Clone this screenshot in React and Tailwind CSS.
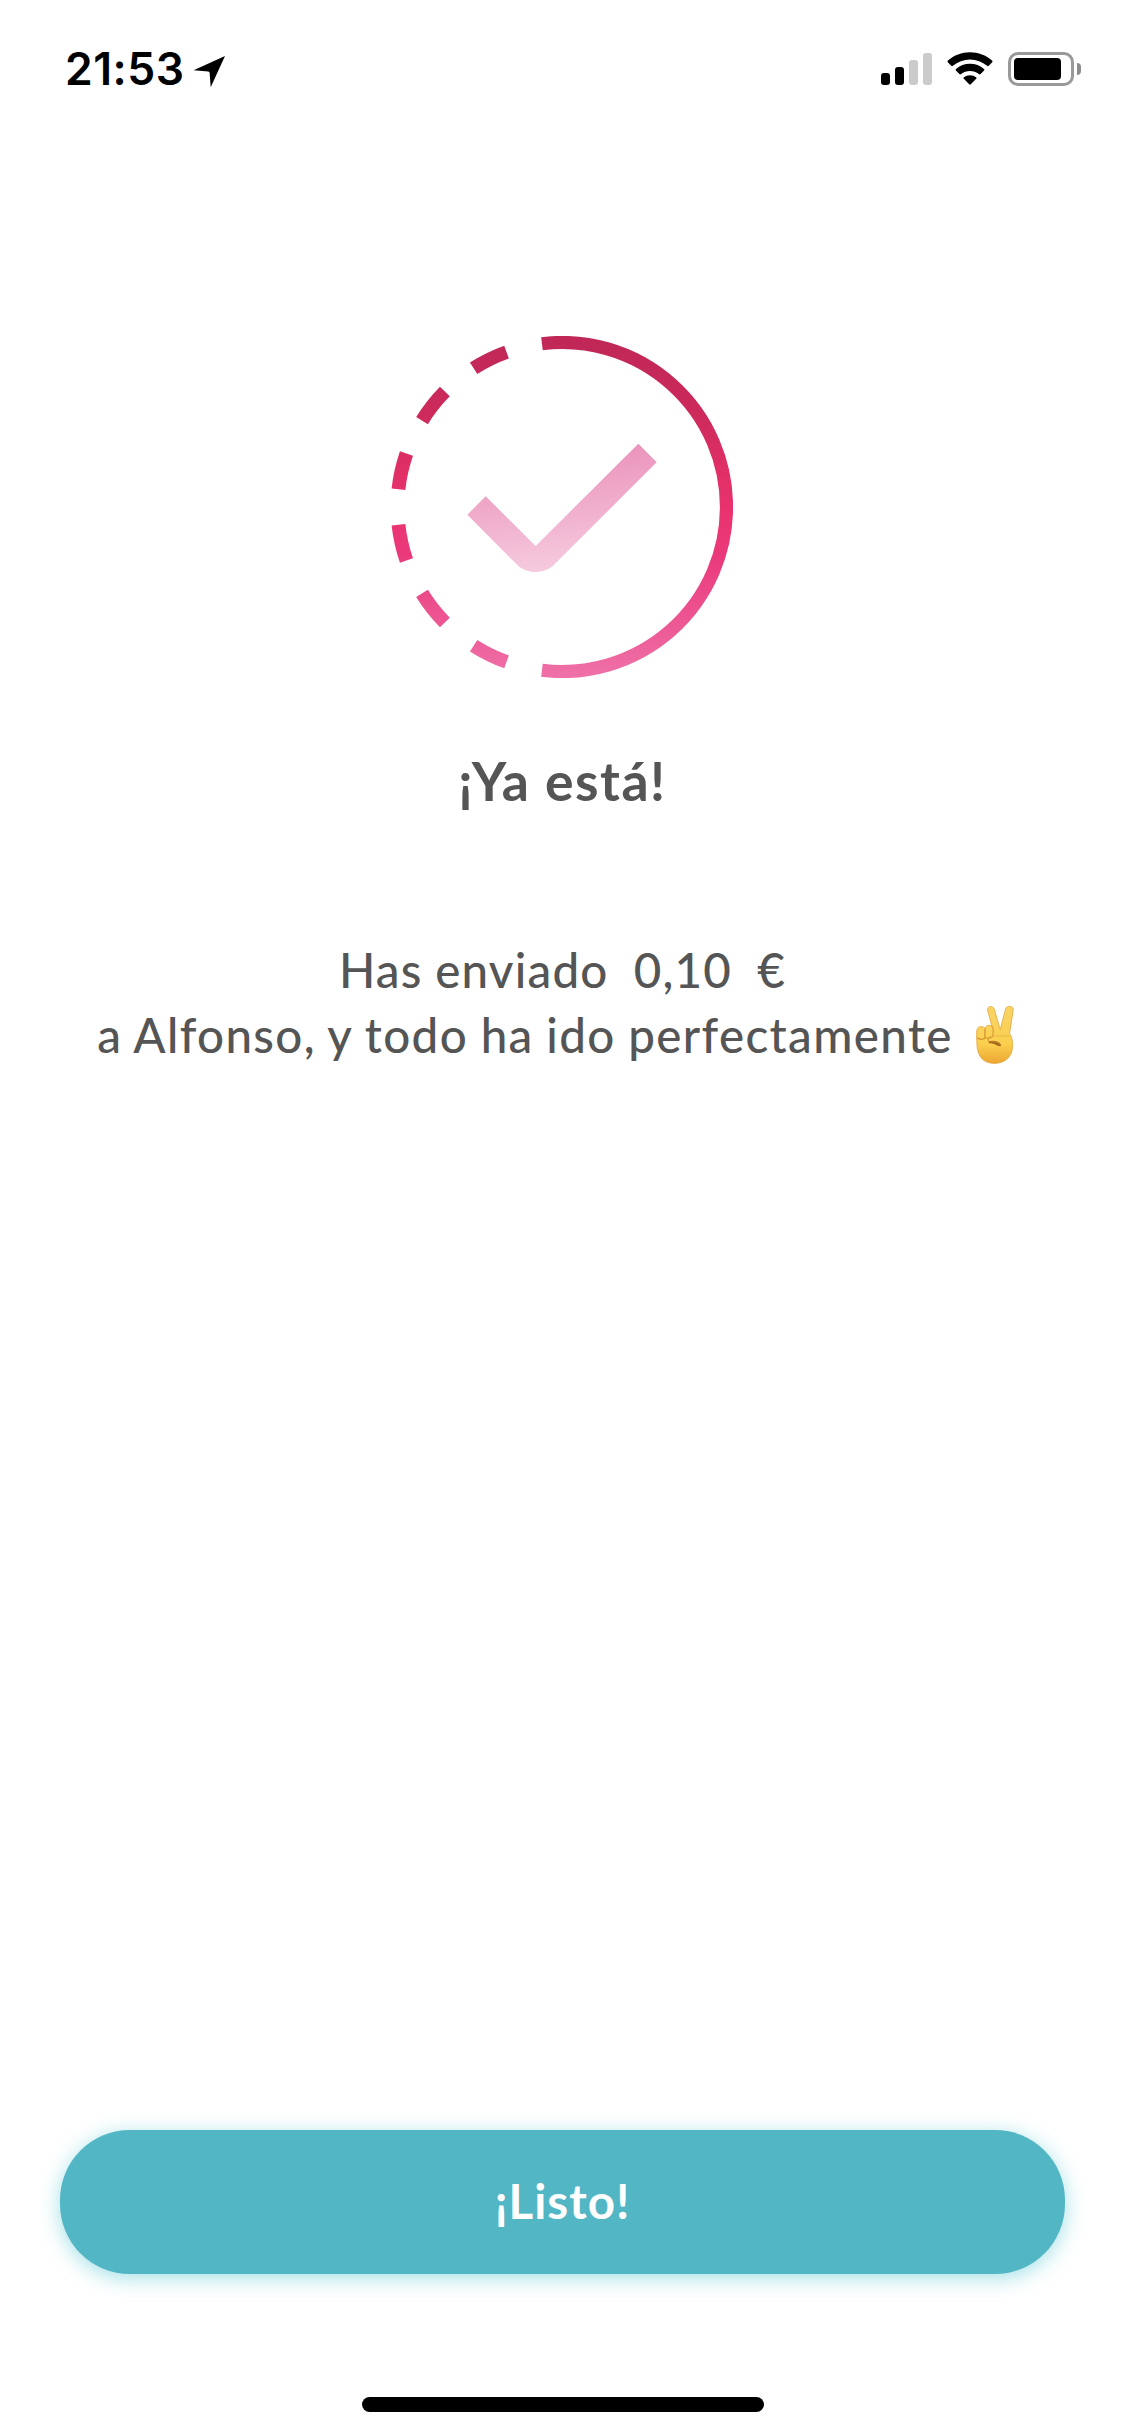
function LocationArrow() {
  return (
    <svg className="ml-[8px] mt-[3px] h-[33px] w-[33px]" viewBox="0 0 33 33">
      <path d="M32 1 17.7 32.3 16.6 17.6Q16.4 16.6 15.4 16.4L.6 15.2Z" fill="#000" />
    </svg>
  );
}

function SignalBars() {
  return (
    <div className="flex h-8 items-end gap-[5px]">
      <div className="h-3 w-[9px] rounded-[3px] bg-black" />
      <div className="h-[18px] w-[9px] rounded-[3px] bg-black" />
      <div className="h-[25px] w-[9px] rounded-[3px] bg-[#cbcbcb]" />
      <div className="h-8 w-[9px] rounded-[3px] bg-[#cbcbcb]" />
    </div>
  );
}

function Wifi() {
  return (
    <svg className="ml-[15px] h-[34px] w-[46px]" viewBox="0 0 46 34">
      <path d="M.8 10.2Q0 9.4.9 8.6C7 3.2 14.7.2 23 .2S39 3.2 45.1 8.6Q46 9.4 45.2 10.2L41.8 13.8Q41 14.5 40.1 13.8C35.3 9.7 29.4 7.4 23 7.4S10.7 9.7 5.9 13.8Q5 14.5 4.2 13.8Z" />
      <path d="M8.9 18.5Q8.1 17.7 9 16.9C12.800 13.500 17.7 11.700 23 11.700S33.200 13.500 37 16.900Q37.900 17.700 37.100 18.500L33.600 22Q32.800 22.800 31.900 22.100C29.400 20.100 26.400 19 23 19S16.600 20.100 14.100 22.100Q13.200 22.800 12.400 22Z" />
      <path d="M16.800 26.700Q16 25.900 16.900 25.200C18.600 23.900 20.700 23.200 23 23.200S27.400 23.900 29.100 25.200Q30 25.900 29.200 26.700L23.800 32.300Q23 33.100 22.200 32.300Z" />
    </svg>
  );
}

function Battery() {
  return (
    <div className="ml-[15px] flex items-center">
      <div className="h-[34px] w-[66px] rounded-[10px] border-[3px] border-[#999] p-[3px]">
        <div className="h-[22px] w-[47px] rounded-[4px] bg-black" />
      </div>
      <div className="ml-[3px] h-3 w-1 rounded-r-full bg-[#8c8c8c]" />
    </div>
  );
}

// Point on the ring, with the angle measured counter-clockwise from the top.
function ringPoint(deg) {
  const a = (deg * Math.PI) / 180;
  return `${171 - 164.5 * Math.sin(a)} ${171 - 164.5 * Math.cos(a)}`;
}

const DASHES = [
  [19.7, 32.5],
  [45.4, 58.3],
  [71, 83.8],
  [96.2, 109],
  [121.7, 134.6],
  [147.5, 160.3],
];

function SuccessMark() {
  return (
    <svg className="mr-[2px] h-[342px] w-[342px]" viewBox="0 0 342 342" fill="none">
      <defs>
        <linearGradient id="ring" gradientUnits="userSpaceOnUse" x1="171" y1="0" x2="171" y2="342">
          <stop offset="0" stopColor="#bf2757" />
          <stop offset=".22" stopColor="#cc2a5b" />
          <stop offset=".38" stopColor="#df2f65" />
          <stop offset=".52" stopColor="#ea336f" />
          <stop offset=".65" stopColor="#ea3a7c" />
          <stop offset="1" stopColor="#ef71a8" />
        </linearGradient>
        <linearGradient id="check" gradientUnits="userSpaceOnUse" x1="160" y1="105" x2="175" y2="238">
          <stop offset="0" stopColor="#ea8db7" />
          <stop offset="1" stopColor="#f6cde0" />
        </linearGradient>
      </defs>
      <g stroke="url(#ring)" strokeWidth="13.2">
        <path d={`M${ringPoint(7)}A164.5 164.5 0 1 1 ${ringPoint(173)}`} />
        {DASHES.map(([from, to]) => (
          <path key={from} strokeWidth="13.8" d={`M${ringPoint(from)}A164.5 164.5 0 0 0 ${ringPoint(to)}`} />
        ))}
      </g>
      <path
        fill="url(#check)"
        d="M76.300 178.700 94.700 160.300 144.700 210 247.300 107.700 265.700 126.300 163.300 228.500C154 238.300 136 238.500 126.300 229Z"
      />
    </svg>
  );
}

function VictoryHand() {
  return (
    <svg className="h-[59px] w-[38px] shrink-0" viewBox="0 0 38 59" role="img" aria-label="✌️">
      <defs>
        <linearGradient id="skin" x1="0" y1="0" x2="0" y2="1">
          <stop offset="0" stopColor="#f8d465" />
          <stop offset=".65" stopColor="#fbd04f" />
          <stop offset="1" stopColor="#eda632" />
        </linearGradient>
      </defs>
      <path
        fill="url(#skin)"
        stroke="#e0a53c"
        strokeWidth=".8"
        d="M11.700 5.300C10.800.800 17 .200 18.300 4.200L24.200 24.500 29.600 4C30.800-.200 38.200.600 37.100 5.600L33.600 28.500C36.200 32 36.900 37 36.400 43C35.900 52 28.500 58.400 18.600 58.400C7 58.400 1.500 51 1 40.500C.900 37.300.600 33.500.600 29.500C.600 24 1.400 21.600 5 21.700Q8 21.700 9 23.300C10 20.300 13 19.600 15.800 21Z"
      />
      <path d="M9.300 23.500C8.600 26 9 29.500 9 33Q6 35.500 1.300 33.200" fill="none" stroke="#d79531" strokeWidth="1.300" />
      <path d="M15.800 21C17.500 23.500 17.400 28 16.700 31C15 33.500 11 34 9 32.300" fill="none" stroke="#d99b36" strokeWidth="1.200" />
      <path d="M12.500 36.500C15.500 35 22 36 24.200 38.500Q25.800 41 24 41.300C20.500 41 19.500 38.300 12.800 38.300Z" fill="#a3671c" />
      <path d="M14.500 31.800C11.500 32.500 11.300 36.200 14 36.700C18 36 23.500 37.300 24.800 40.300" fill="none" stroke="#c98628" strokeWidth=".9" />
      <path d="M17 31.300C22 30.300 29 31.500 33.700 31" fill="none" stroke="#e5ad40" strokeWidth=".8" />
    </svg>
  );
}

export default function App() {
  return (
    <div className="flex h-[2436px] w-[1125px] flex-col bg-white font-['Lato',sans-serif] text-[#555]">
      <header className="flex h-[138px] items-start justify-between pl-[65px] pr-[44px] pt-[52px]">
        <div className="flex items-start">
          <span className="font-['Inter',sans-serif] text-[44.5px] font-semibold leading-[34px] tracking-[0.5px] text-black">
            21:53
          </span>
          <LocationArrow />
        </div>
        <div className="flex items-center">
          <SignalBars />
          <Wifi />
          <Battery />
        </div>
      </header>

      <main className="flex flex-1 flex-col items-center pt-[198px]">
        <SuccessMark />
        <h1 className="mt-[70px] whitespace-nowrap text-[53.5px] font-bold leading-[65px] tracking-[1.5px]">¡Ya está!</h1>
        <div className="mt-[124px] flex flex-col items-center text-[47.5px] font-medium leading-[65px]">
          <p className="whitespace-pre tracking-[1.2px] [word-spacing:-0.6px]">{"Has enviado  0,10  €"}</p>
          <div className="mr-[14px] flex items-center gap-[23px]">
            <p className="whitespace-nowrap tracking-[1.35px] [word-spacing:-0.7px]">
              a Alfonso, y todo ha ido perfectamente
            </p>
            <VictoryHand />
          </div>
        </div>
      </main>

      <footer className="flex flex-col items-center px-[60px] pb-6">
        <button className="h-36 w-full rounded-[70px] bg-[#53b6c4] pb-[3px] text-[47.5px] font-bold tracking-[1px] text-white shadow-[0_4px_20px_rgba(70,195,210,0.5)]">
          ¡Listo!
        </button>
        <div className="mt-[123px] h-[15px] w-[402px] rounded-full bg-black" />
      </footer>
    </div>
  );
}
